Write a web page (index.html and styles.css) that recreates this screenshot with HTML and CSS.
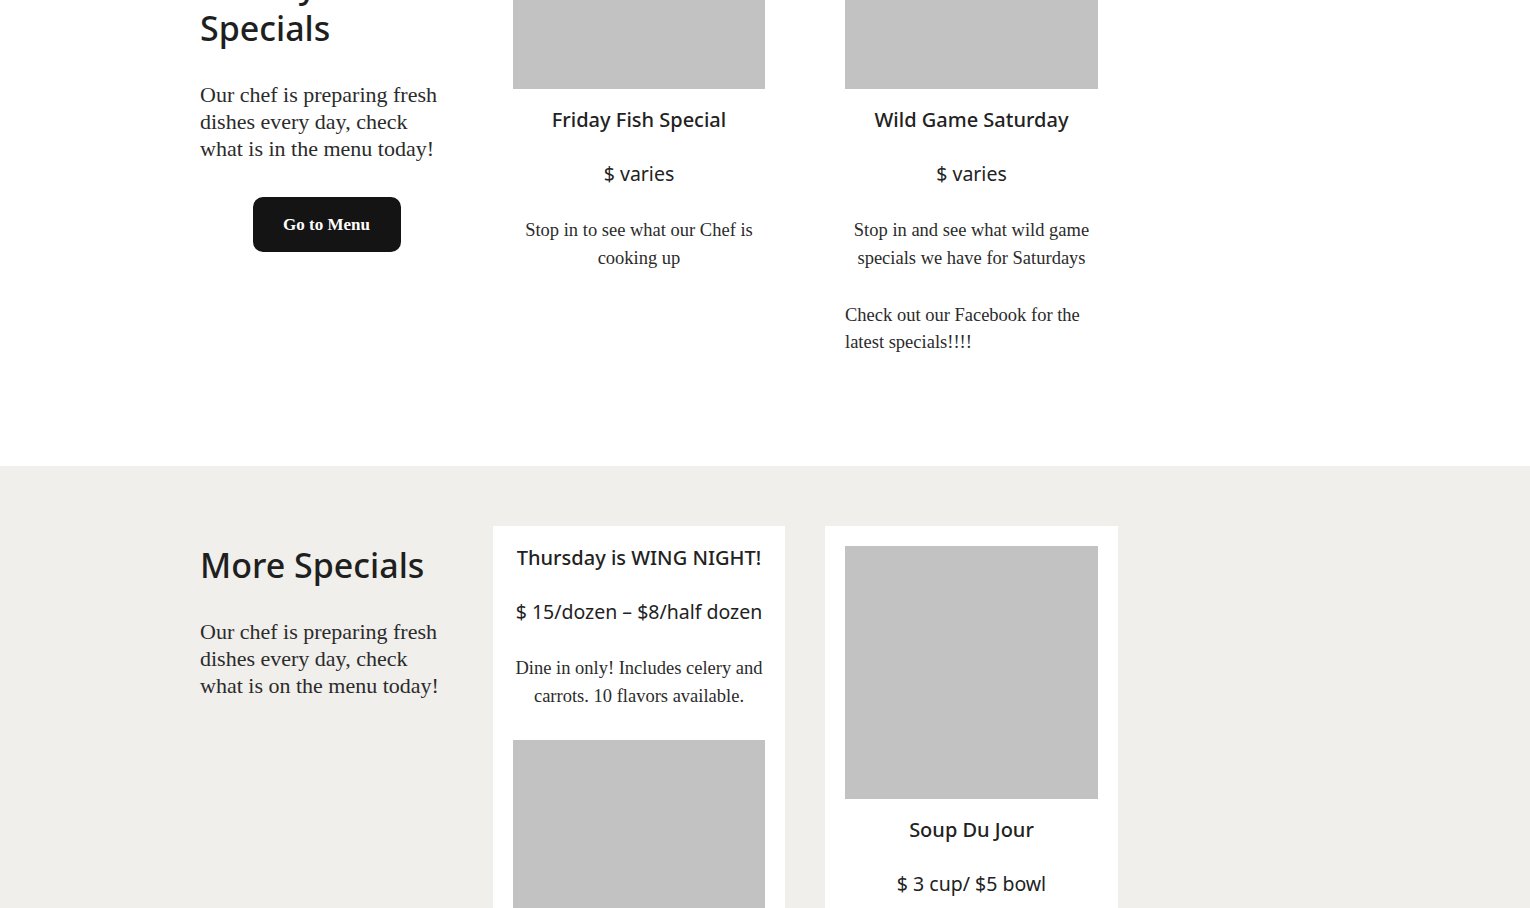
FILE: index.html
```html
<!DOCTYPE html>
<html lang="en">
<head>
  <meta charset="UTF-8" />
  <meta name="viewport" content="width=device-width, initial-scale=1.0"/>
  <title>Specials</title>
  <link rel="stylesheet" href="styles.css">
</head>
<body>
  <section class="specials weekly">
    <div class="container">
      <div class="intro">
        <h2>Weekly Specials</h2>
        <p>Our chef is preparing fresh dishes every day, check what is in the menu today!</p>
        <div class="btn-wrap"><a class="btn" href="#">Go to Menu</a></div>
      </div>

      <div class="col">
        <article class="card">
          <div class="photo"></div>
          <h3>Friday Fish Special</h3>
          <div class="price">$ varies</div>
          <p class="desc">Stop in to see what our Chef is cooking up</p>
        </article>
      </div>

      <div class="col">
        <article class="card">
          <div class="photo"></div>
          <h3>Wild Game Saturday</h3>
          <div class="price">$ varies</div>
          <p class="desc">Stop in and see what wild game specials we have for Saturdays</p>
        </article>
        <p class="note">Check out our Facebook for the latest specials!!!!</p>
      </div>
    </div>
  </section>

  <section class="specials more">
    <div class="container">
      <div class="intro">
        <h2>More Specials</h2>
        <p>Our chef is preparing fresh dishes every day, check what is on the menu today!</p>
      </div>

      <div class="col">
        <article class="card">
          <h3>Thursday is WING NIGHT!</h3>
          <div class="price">$ 15/dozen &ndash; $8/half dozen</div>
          <p class="desc">Dine in only! Includes celery and carrots. 10 flavors available.</p>
          <div class="photo"></div>
        </article>
      </div>

      <div class="col">
        <article class="card">
          <div class="photo"></div>
          <h3>Soup Du Jour</h3>
          <div class="price">$ 3 cup/ $5 bowl</div>
          <p class="desc">A fresh pot every day, ask your server what is on today</p>
        </article>
      </div>
    </div>
  </section>
</body>
</html>
```

FILE: styles.css
```css
body {
  margin: 0;
  background: #fff;
  color: #2b2b2b;
  font-family: 'Liberation Serif', serif;
  overflow: hidden;
}

.container {
  width: 1130px;
  margin: 0 auto;
  display: grid;
  grid-template-columns: 253px 292px 293px;
  column-gap: 40px;
  align-items: start;
}

.specials {
  padding: 60px 0;
}

/* page is shown scrolled, top of the first block is above the fold */
.weekly {
  margin-top: -244px;
  padding-bottom: 110px;
}

.weekly .intro {
  padding-top: 130px;
}

.more {
  background: #f0efeb;
  padding-top: 60px;
  min-height: 600px;
}

.intro h2 {
  font-family: 'Noto Sans', sans-serif;
  font-weight: 500;
  font-size: 34px;
  line-height: 43px;
  color: #1f1f1f;
  max-width: 240px;
  margin: 18px 0 0;
}

.intro p {
  font-size: 22px;
  line-height: 27px;
  margin: 31px 0 0;
}

.btn-wrap {
  text-align: center;
  margin-top: 35px;
}

.btn {
  display: inline-block;
  width: 148px;
  height: 55px;
  line-height: 55px;
  background: #141414;
  color: #fff;
  border-radius: 10px;
  font-weight: bold;
  font-size: 17px;
  text-decoration: none;
}

.card {
  background: #fff;
  padding: 20px;
  text-align: center;
}

.photo {
  height: 253px;
  background: #c2c2c2;
}

.card h3 {
  font-family: 'Noto Sans', sans-serif;
  font-weight: 500;
  font-size: 20px;
  line-height: 24px;
  color: #222;
  margin: 0;
}

.photo + h3 {
  margin-top: 19px;
}

.price {
  font-family: 'Noto Sans', sans-serif;
  font-size: 19.5px;
  line-height: 24px;
  color: #222;
  margin-top: 30px;
}

.desc {
  font-size: 18.5px;
  line-height: 28px;
  margin: 30px 0 0;
}

.desc + .photo {
  margin-top: 30px;
}

.note {
  font-size: 18.5px;
  line-height: 27px;
  padding: 0 20px;
  margin: 10px 0 0;
}
```
